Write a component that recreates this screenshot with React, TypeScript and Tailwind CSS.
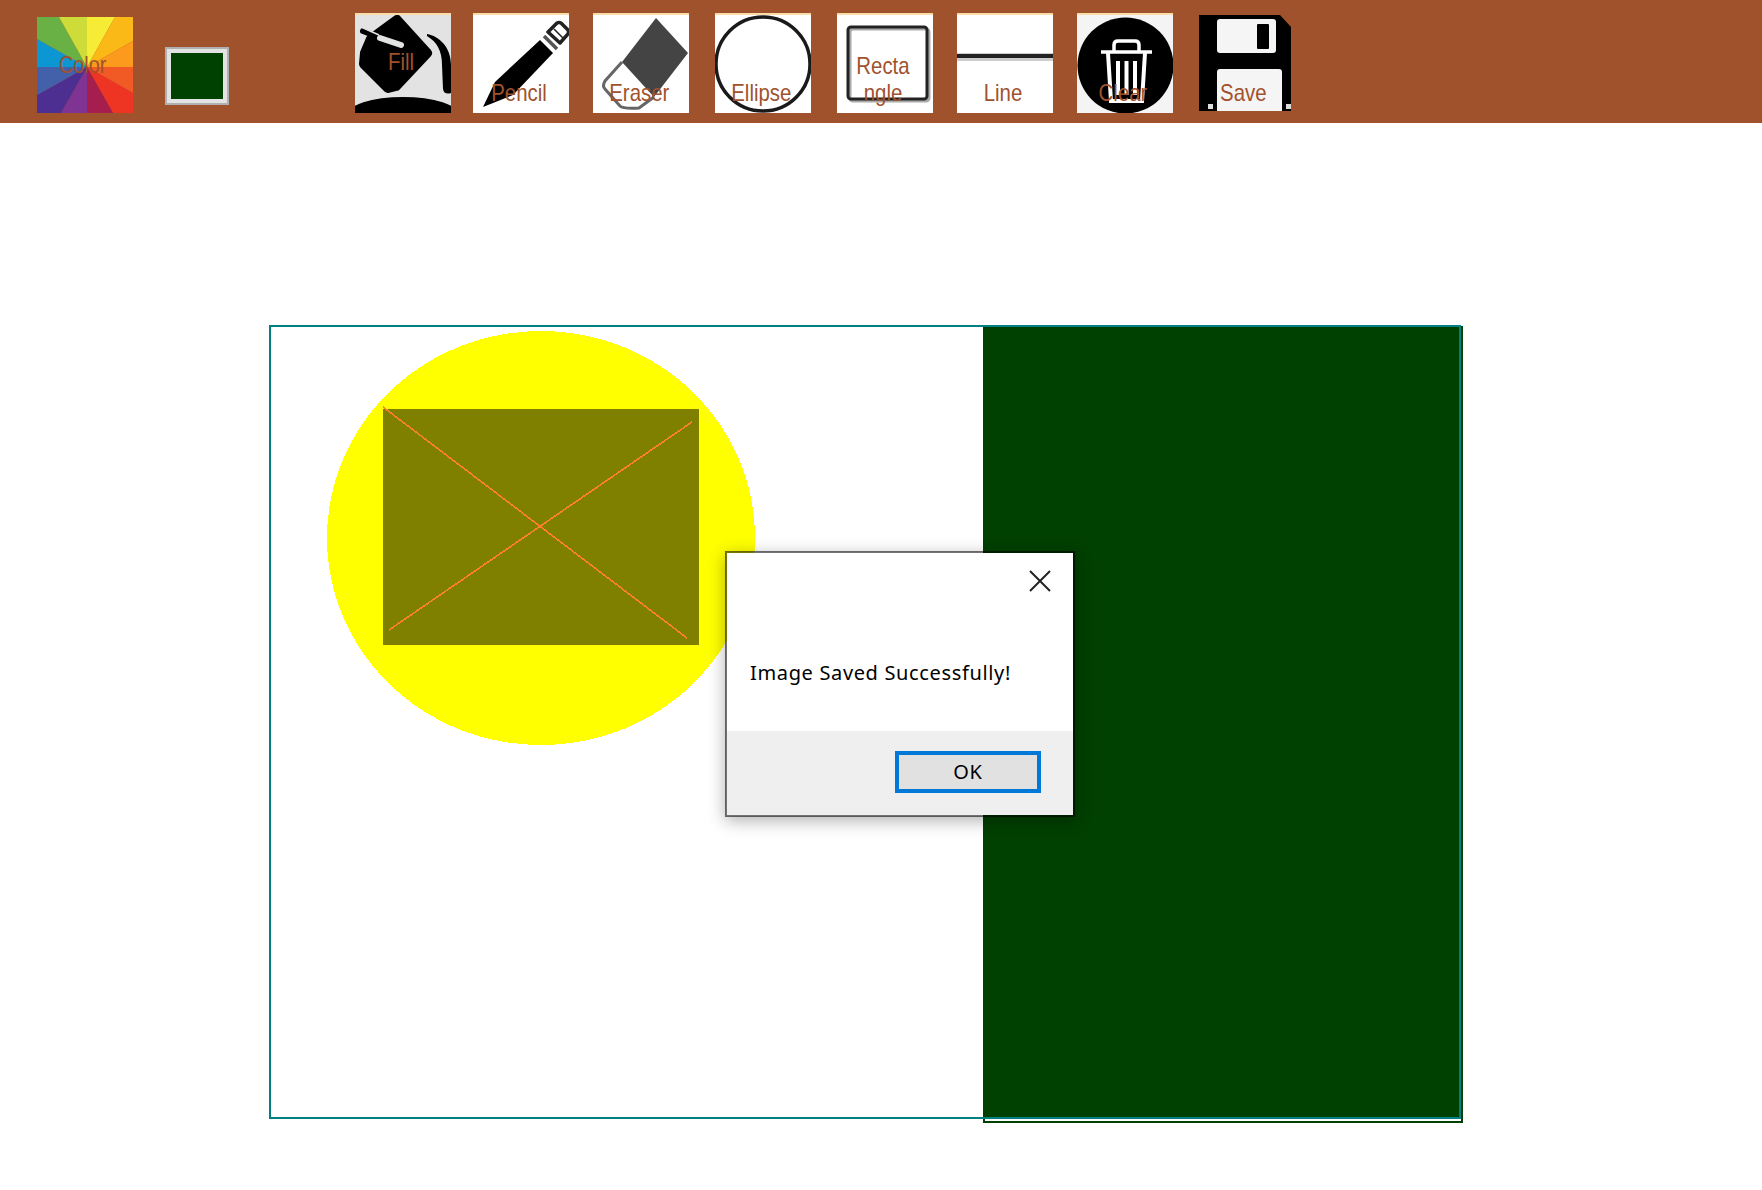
const wedges = [
  ["50,50 50,0 78,0", "#f7ec35"],
  ["50,50 78,0 96,0 96,24", "#fbb917"],
  ["50,50 96,24 96,50", "#fb9a1c"],
  ["50,50 96,50 96,76", "#f15a24"],
  ["50,50 96,76 96,96 76,96", "#ee3524"],
  ["50,50 76,96 50,96", "#a61e4d"],
  ["50,50 50,96 24,96", "#7f3494"],
  ["50,50 24,96 0,96 0,78", "#4d2e91"],
  ["50,50 0,78 0,50", "#4360ab"],
  ["50,50 0,50 0,22", "#0c96d2"],
  ["50,50 0,22 0,0 22,0", "#69b045"],
  ["50,50 22,0 50,0", "#cedc39"],
]

const ColorWheel = () => (
  <svg viewBox="0 0 96 96" className="absolute inset-0 size-full">
    {wedges.map(([points, fill]) => (
      <polygon key={points} points={points} fill={fill} />
    ))}
  </svg>
)

const FillIcon = () => (
  <svg viewBox="0 0 96 98" className="absolute inset-0 size-full">
    <rect width="96" height="98" fill="#e3e3e3" />
    <polygon points="42,5 72,38 41,71 33,73 9,49 10,38 16,24" fill="#000" stroke="#000" strokeWidth="10" strokeLinejoin="round" />
    <path d="M8 16 L26 23" stroke="#000" strokeWidth="6" strokeLinecap="round" />
    <path d="M6 12 L24 20" stroke="#e3e3e3" strokeWidth="1.5" />
    <path d="M25 23 L46 30" stroke="#e3e3e3" strokeWidth="6" strokeLinecap="round" />
    <path d="M72 19 C84 21 96 32 96 50 V78 Q89 80 88 74 L87 50 C87 36 82 27 72 21 Z" fill="#000" />
    <ellipse cx="48" cy="100" rx="56" ry="18" fill="#000" />
  </svg>
)

const PencilIcon = () => (
  <svg viewBox="0 0 96 98" className="absolute inset-0 size-full">
    <polygon points="10,92 22,67 67,25 80,38 40,80" fill="#000" />
    <path d="M71 21 L84 34" stroke="#555" strokeWidth="3.5" />
    <path d="M75 17 L84 8 Q86 7 88 8 L95 15 Q96 17 95 19 L87 28 Z" fill="#fff" stroke="#222" strokeWidth="3.5" strokeLinejoin="round" />
    <path d="M81 14 L90 23" stroke="#222" strokeWidth="1.5" />
  </svg>
)

const EraserIcon = () => (
  <svg viewBox="0 0 96 98" className="absolute inset-0 size-full">
    <path d="M29 47 L12 66 Q9 71 12 74 L27 91 Q30 94 46 93 L61 82" fill="#fff" stroke="#666" strokeWidth="3" />
    <polygon points="63,3 95,38 61,82 29,47" fill="#444" />
  </svg>
)

const EllipseIcon = () => (
  <svg viewBox="0 0 96 98" className="absolute inset-0 size-full">
    <circle cx="48" cy="49" r="47" fill="none" stroke="#1a1a1a" strokeWidth="3.5" />
  </svg>
)

const RectangleIcon = () => (
  <svg viewBox="0 0 96 98" className="absolute inset-0 size-full">
    <rect x="13" y="14" width="79" height="72" rx="3" fill="none" stroke="#aaa" strokeWidth="3" />
    <rect x="11" y="12" width="79" height="72" rx="3" fill="none" stroke="#222" strokeWidth="3" />
  </svg>
)

const LineIcon = () => (
  <svg viewBox="0 0 96 98" className="absolute inset-0 size-full">
    <rect y="38" width="96" height="8" fill="#ccc" />
    <rect y="39" width="96" height="4" fill="#222" />
  </svg>
)

const ClearIcon = () => (
  <svg viewBox="0 0 96 98" className="absolute inset-0 size-full">
    <rect width="96" height="98" fill="#f4f4f4" />
    <circle cx="48.5" cy="50.5" r="48" fill="#000" />
    <path d="M24 37 H75" stroke="#fff" strokeWidth="3.5" />
    <path d="M37 36 V30 Q37 26 41 26 H58 Q62 26 62 30 V36" stroke="#fff" strokeWidth="3.5" fill="none" />
    <path d="M31 38 L34 86 H65 L68 38" stroke="#fff" strokeWidth="4" fill="none" />
    <path d="M41 46 V80 M49.5 46 V80 M58 46 V80" stroke="#fff" strokeWidth="4" />
  </svg>
)

const SaveIcon = () => (
  <svg viewBox="0 0 92 96" className="absolute inset-0 size-full">
    <polygon points="0,0 81,0 92,12 92,96 0,96" fill="#000" />
    <rect x="18" y="4" width="59" height="34" rx="3" fill="#f5f5f5" />
    <rect x="58" y="9" width="12" height="25" rx="1" fill="#000" />
    <path d="M18 96 V57 Q18 54 21 54 H80 Q83 54 83 57 V96 Z" fill="#f5f5f5" />
    <rect x="9" y="89" width="5" height="5" fill="#ddd" />
    <rect x="87" y="89" width="5" height="5" fill="#ddd" />
  </svg>
)

const tools = [
  { label: "Fill", icon: <FillIcon />, margin: "ml-[126px]", text: "items-start pt-[33px]" },
  { label: "Pencil", icon: <PencilIcon />, margin: "ml-[22px]", text: "items-end pb-[7px]" },
  { label: "Eraser", icon: <EraserIcon />, margin: "ml-[24px]", text: "items-end pb-[7px]" },
  { label: "Ellipse", icon: <EllipseIcon />, margin: "ml-[26px]", text: "items-end pb-[7px]" },
  { label: "Recta ngle", icon: <RectangleIcon />, margin: "ml-[26px]", text: "items-end pb-[7px]" },
  { label: "Line", icon: <LineIcon />, margin: "ml-[24px]", text: "items-end pb-[7px]" },
  { label: "Clear", icon: <ClearIcon />, margin: "ml-[24px]", text: "items-end pb-[7px]" },
]

const App = () => {
  return (
    <div className="relative h-[1190px] w-[1762px] overflow-hidden bg-white font-['Liberation_Sans',sans-serif]">
      <header className="flex h-[123px] bg-[#a0522d]">
        <button className="relative mt-[17px] ml-[37px] flex size-[96px] items-center justify-center pr-[5px] text-[24px] leading-6 text-[#a0522d]">
          <ColorWheel />
          <span className="relative scale-x-[.83]">Color</span>
        </button>
        <div className="mt-[47px] ml-[32px] h-[58px] w-[64px] border-2 border-[#b0b0b0] bg-[#e3e3e3] p-[4px]">
          <div className="size-full bg-[#004000]" />
        </div>
        {tools.map((tool) => (
          <button
            key={tool.label}
            className={`relative mt-[13px] flex h-[100px] w-[96px] justify-center border-t-2 border-[#fcdca8] bg-white pr-[4px] text-center text-[24px] leading-[27px] text-[#a0522d] ${tool.margin} ${tool.text}`}
          >
            {tool.icon}
            <span className="relative w-[70px] scale-x-[.85]">{tool.label}</span>
          </button>
        ))}
        <button className="relative mt-[15px] ml-[26px] flex h-[96px] w-[92px] items-end justify-center pr-[4px] pb-[5px] text-[24px] leading-[27px] text-[#a0522d]">
          <SaveIcon />
          <span className="relative scale-x-[.85]">Save</span>
        </button>
      </header>

      <main className="relative mt-[202px] ml-[269px] h-[794px] w-[1192px] border-2 border-[#008080]">
        {/* drawn shapes, offsets are canvas coordinates */}
        <svg className="absolute -top-[2px] -left-[2px] h-[800px] w-[1196px] overflow-visible" viewBox="269 325 1196 800" shapeRendering="crispEdges">
          <ellipse cx="541" cy="538" rx="214" ry="207" fill="#ffff00" />
          <rect x="383" y="409" width="316" height="236" fill="#808000" />
          <path d="M383 407 L687 638 M389 630 L692 422" stroke="#ff7f2f" strokeWidth="1.6" fill="none" />
          <rect x="984" y="327" width="478" height="795" fill="#fff" stroke="#004000" strokeWidth="2" />
          <rect x="983" y="327" width="478" height="790" fill="#004000" />
          <path d="M983 1118 H1461 M1460 325 V1119 M983 326 H1461" stroke="#008080" strokeWidth="2" fill="none" />
        </svg>
      </main>

      <div className="absolute top-[551px] left-[725px] flex h-[266px] w-[350px] flex-col border-2 border-black/55 bg-white bg-clip-padding shadow-[0_4px_16px_rgba(0,0,0,0.3)]">
        <div className="flex h-[178px] flex-col justify-between">
          <div className="flex justify-end pt-[17px] pr-[22px]">
            <svg width="22" height="22" viewBox="0 0 22 22">
              <path d="M1 1 L21 21 M21 1 L1 21" stroke="#222" strokeWidth="2" />
            </svg>
          </div>
          <p className="pb-[44px] pl-[23px] font-['Noto_Sans',sans-serif] text-[20px] leading-7 tracking-[0.65px] text-black">Image Saved Successfully!</p>
        </div>
        <div className="flex flex-1 items-start justify-end bg-[#efefef] pt-[20px] pr-[32px]">
          <button className="h-[42px] w-[146px] border-4 border-[#0078d7] bg-[#e1e1e1] font-['Noto_Sans',sans-serif] text-[20px] leading-none tracking-[0.65px] text-black">OK</button>
        </div>
      </div>
    </div>
  )
}

export default App
